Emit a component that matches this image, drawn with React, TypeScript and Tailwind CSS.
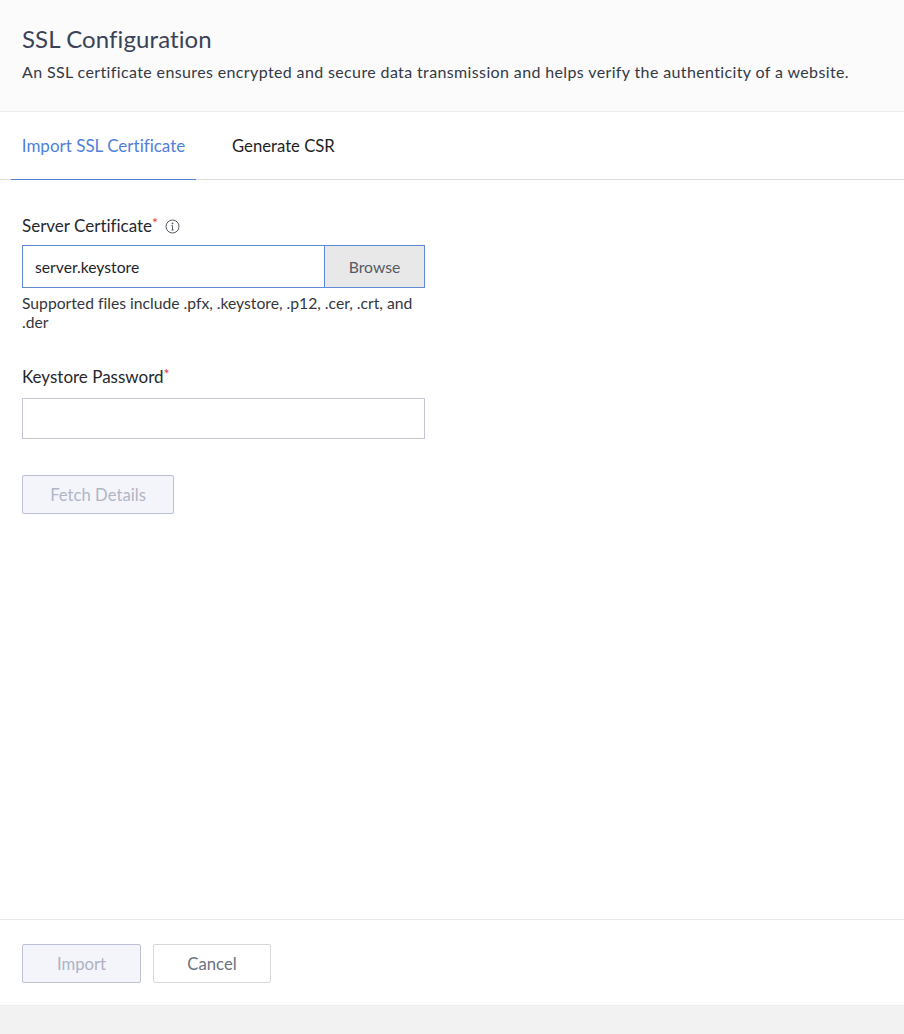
import React from "react";

function Star() {
  return <span className="text-[#e8383d] text-[14px] leading-none relative -top-[3px]">*</span>;
}

export default function App() {
  return (
    <div className="w-[904px] h-[1034px] flex flex-col bg-white font-['Lato',sans-serif] [font-variant-ligatures:none] text-[#22242a] overflow-hidden">
      <header className="h-[112px] shrink-0 bg-[#fbfbfc] border-b border-[#ececec] pl-[22px] pt-[24px]">
        <h1 className="text-[24px] leading-[30px] tracking-[0.1px] text-[#3a4356]">SSL Configuration</h1>
        <p className="mt-[8px] text-[16px] leading-[20px] tracking-[0.37px] text-[#333945]">
          An SSL certificate ensures encrypted and secure data transmission and helps verify the authenticity of a website.
        </p>
      </header>

      <nav className="h-[68px] shrink-0 flex pl-[11px] border-b border-[#dedede] relative">
        <div className="w-[185px] h-[68px] flex items-start justify-center pt-[23px] border-b border-[#4f81d9] text-[17px] leading-[22px] text-[#4f81d9]">
          Import SSL Certificate
        </div>
        <div className="ml-[36px] pt-[23px] text-[16.7px] leading-[22px] text-[#1f1f1f]">Generate CSR</div>
      </nav>

      <main className="flex-1 pl-[22px] pt-[35px]">
        <div className="w-[403px]">
          <label className="flex items-center h-[22px] text-[17px] text-[#26282e]">
            Server Certificate<Star />
            <svg className="ml-[7px] text-[#555a63]" width="15" height="15" viewBox="0 0 15 15" fill="none" stroke="currentColor" strokeWidth="1">
              <circle cx="7.5" cy="7.5" r="6.5" />
              <path d="M7.5 6.6v4.4M6.4 6.6h1.1M6.4 11h2.2" />
              <circle cx="7.5" cy="4.4" r="0.5" fill="currentColor" />
            </svg>
          </label>
          <div className="mt-[8px] h-[43px] flex border border-[#5f8ad6]">
            <div className="flex-1 flex items-center pl-[12px] pt-[2px] text-[15.7px] text-[#22242a]">server.keystore</div>
            <div className="w-[100px] border-l border-[#5f8ad6] bg-[#e8e8e8] flex items-center justify-center pt-[2px] text-[15.7px] text-[#555a63]">
              Browse
            </div>
          </div>
          <p className="mt-[6px] text-[15.7px] leading-[19px] text-[#33363c]">
            Supported files include .pfx, .keystore, .p12, .cer, .crt, and .der
          </p>
          <label className="mt-[34px] flex items-center h-[22px] text-[17px] text-[#26282e]">
            Keystore Password<Star />
          </label>
          <div className="mt-[10px] h-[41px] border border-[#c3c6cf] bg-white" />
          <button className="mt-[36px] w-[152px] h-[39px] pt-[2px] rounded-[2px] border border-[#bcc1d2] bg-[#f4f5fa] text-[16.7px] text-[#b1b6c6]">
            Fetch Details
          </button>
        </div>
      </main>

      <footer className="h-[86px] shrink-0 border-t border-[#e9e9e9] pl-[22px] pt-[24px] flex gap-[12px] items-start">
        <button className="w-[119px] h-[39px] pt-[2px] rounded-[2px] border border-[#bcc1d8] bg-[#f4f5fa] text-[16.7px] text-[#adb2c4]">Import</button>
        <button className="w-[118px] h-[39px] pt-[2px] rounded-[2px] border border-[#d8d9dd] bg-white text-[16.7px] text-[#6b7280]">Cancel</button>
      </footer>
      <div className="h-[29px] shrink-0 bg-[#f2f2f2] border-t border-[#ececec]" />
    </div>
  );
}
